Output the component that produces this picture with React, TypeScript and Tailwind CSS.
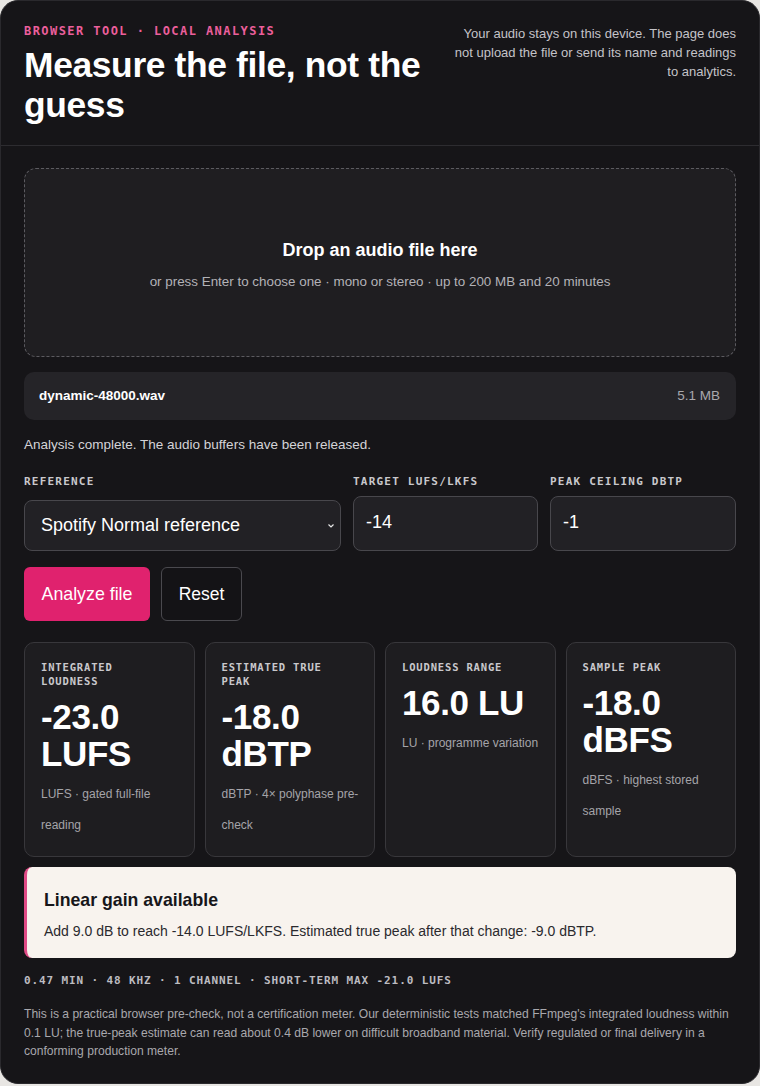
import React from "react";

const sans = { fontFamily: '"Liberation Sans", Arial, sans-serif' };

function Metric({ label, value, sub }: { label: React.ReactNode; value: React.ReactNode; sub: string }) {
  return (
    <div className="rounded-[10px] border border-[#38373b] bg-[#1e1d20] pl-4 pr-[10px] pt-[17px] pb-[15px]">
      <div className="font-['DejaVu_Sans_Mono',monospace] text-[10.5px] font-bold leading-[14px] tracking-[0.08em] text-[#c9c8cc]">{label}</div>
      <div className="mt-[10px] text-[35px] font-bold leading-[37px] tracking-[-0.01em] text-white">{value}</div>
      <div className="mt-[7px] text-[12px] leading-[31px] text-[#a5a4a9]">{sub}</div>
    </div>
  );
}

export default function App() {
  return (
    <div className="min-h-screen bg-[#e8e6e3]" style={sans}>
      <div className="h-[1084px] overflow-hidden rounded-[18px] border border-[#2a292d] bg-[#161518]">
        <header className="flex items-start justify-between border-b border-[#2d2c30] px-[23px] pt-[23px] pb-[20px]">
          <div>
            <div className="font-['DejaVu_Sans_Mono',monospace] text-[12px] font-bold leading-[14px] tracking-[0.12em] text-[#ec5f9c]">
              BROWSER TOOL · LOCAL ANALYSIS
            </div>
            <h1 className="mt-[7px] w-[420px] text-[35.4px] font-bold leading-[40px] tracking-[-0.01em] text-white">
              Measure the file, not the guess
            </h1>
          </div>
          <p className="w-[286px] text-right text-[13px] leading-[19px] text-[#c4c3c8]">
            Your audio stays on this device. The page does not upload the file or send its name and readings to analytics.
          </p>
        </header>

        <main className="px-[23px] pt-[22px]">
          <div className="flex h-[189px] flex-col items-center justify-center rounded-[12px] border border-dashed border-[#5c5b60] bg-[#1f1e21]">
            <div className="mt-[4px] text-[18px] font-bold leading-[22px] text-white">Drop an audio file here</div>
            <div className="mt-[12px] text-[13.4px] leading-[18px] text-[#b3b2b7]">
              or press Enter to choose one · mono or stereo · up to 200 MB and 20 minutes
            </div>
          </div>

          <div className="mt-[15px] flex h-[48px] items-center justify-between rounded-[10px] bg-[#252428] pl-[15px] pr-[16px]">
            <span className="text-[13.5px] font-bold text-white">dynamic-48000.wav</span>
            <span className="text-[13.5px] text-[#a9a8ad]">5.1 MB</span>
          </div>

          <p className="mt-[15px] text-[13.5px] leading-[20px] text-[#d4d3d7]">
            Analysis complete. The audio buffers have been released.
          </p>

          <div className="mt-[20px] grid grid-cols-[317px_185px_186px] gap-x-[12px]">
            <div className="flex flex-col">
              <label className="font-['DejaVu_Sans_Mono',monospace] text-[11px] font-bold leading-[14px] tracking-[0.11em] text-[#c9c8cc]">REFERENCE</label>
              <div className="mt-[11px] flex h-[51px] items-center justify-between rounded-[8px] border border-[#48474c] bg-[#222125] pl-[16px] pr-[5px]">
                <span className="text-[18px] text-white">Spotify Normal reference</span>
                <svg width="8" height="8" viewBox="0 0 8 8" className="text-[#e6e6e6]">
                  <path d="M1.5 2.5 L4 5 L6.5 2.5" fill="none" stroke="currentColor" strokeWidth="1.2" />
                </svg>
              </div>
            </div>
            <div className="flex flex-col">
              <label className="font-['DejaVu_Sans_Mono',monospace] text-[11px] font-bold leading-[14px] tracking-[0.11em] text-[#c9c8cc]">TARGET LUFS/LKFS</label>
              <div className="mt-[7px] flex h-[55px] items-center rounded-[8px] border border-[#48474c] bg-[#222125] px-[12px] pb-[3px]">
                <span className="text-[18px] text-white">-14</span>
              </div>
            </div>
            <div className="flex flex-col">
              <label className="font-['DejaVu_Sans_Mono',monospace] text-[11px] font-bold leading-[14px] tracking-[0.11em] text-[#c9c8cc]">PEAK CEILING DBTP</label>
              <div className="mt-[7px] flex h-[55px] items-center rounded-[8px] border border-[#48474c] bg-[#222125] px-[12px] pb-[3px]">
                <span className="text-[18px] text-white">-1</span>
              </div>
            </div>
          </div>

          <div className="mt-[16px] flex gap-[11px]">
            <button className="h-[54px] w-[126px] rounded-[6px] bg-[#e0226e] text-[17.8px] text-white">Analyze file</button>
            <button className="h-[54px] w-[81px] rounded-[6px] border border-[#4a494e] bg-[#141316] text-[17.5px] text-white">Reset</button>
          </div>

          <div className="mt-[21px] grid grid-cols-4 gap-[10px]">
            <Metric label={<>INTEGRATED<br />LOUDNESS</>} value={<>-23.0<br />LUFS</>} sub="LUFS · gated full-file reading" />
            <Metric label={<>ESTIMATED TRUE<br />PEAK</>} value={<>-18.0<br />dBTP</>} sub="dBTP · 4× polyphase pre-check" />
            <Metric label="LOUDNESS RANGE" value="16.0 LU" sub="LU · programme variation" />
            <Metric label="SAMPLE PEAK" value={<>-18.0<br />dBFS</>} sub="dBFS · highest stored sample" />
          </div>

          <div className="mt-[10px] rounded-[8px] border-l-[3px] border-[#e04a86] bg-[#f8f3ee] pl-[17px] pr-[18px] pt-[22px] pb-[17px]">
            <div className="text-[17.7px] font-bold leading-[22px] text-[#17161a]">Linear gain available</div>
            <div className="mt-[11px] text-[14px] leading-[19px] text-[#2a292d]">
              Add 9.0 dB to reach -14.0 LUFS/LKFS. Estimated true peak after that change: -9.0 dBTP.
            </div>
          </div>

          <div className="mt-[16px] font-['DejaVu_Sans_Mono',monospace] text-[11px] font-bold leading-[14px] tracking-[0.08em] text-[#bdbcc1]">
            0.47 MIN · 48 KHZ · 1 CHANNEL · SHORT-TERM MAX -21.0 LUFS
          </div>

          <p className="mt-[17px] text-[12.1px] leading-[18.5px] text-[#a9a8ad]">
            This is a practical browser pre-check, not a certification meter. Our deterministic tests matched FFmpeg's integrated loudness within 0.1 LU; the true-peak estimate can read about 0.4 dB lower on difficult broadband material. Verify regulated or final delivery in a conforming production meter.
          </p>
        </main>
      </div>
    </div>
  );
}
